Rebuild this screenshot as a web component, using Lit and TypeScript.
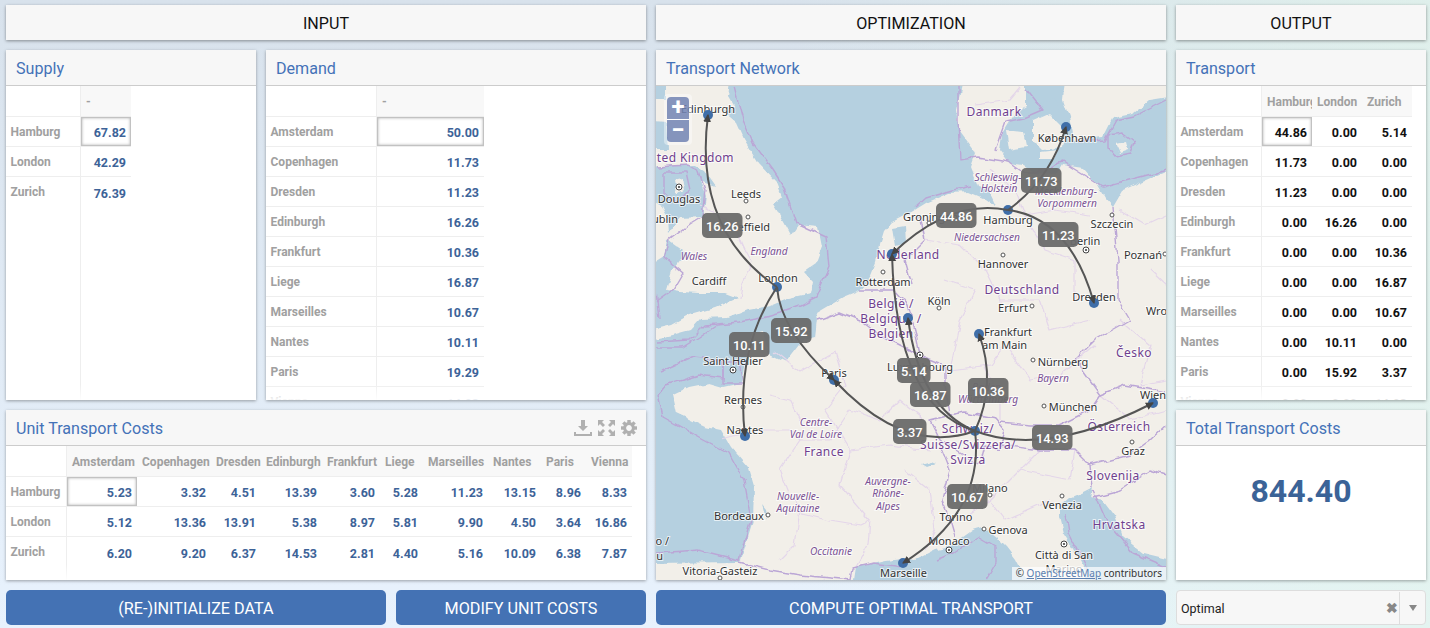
import { LitElement, css, html, svg } from 'lit';
import { customElement, property } from 'lit/decorators.js';

const F = css`Roboto, "Liberation Sans", sans-serif`;

const DEST = ['Amsterdam', 'Copenhagen', 'Dresden', 'Edinburgh', 'Frankfurt', 'Liege', 'Marseilles', 'Nantes', 'Paris', 'Vienna'];

@customElement('data-grid')
class DataGrid extends LitElement {
  static styles = css`
    :host { display: block; height: 100%; }
    .wrap { position: relative; height: 100%; overflow: hidden; display: flex; flex-direction: column; }
    .wrap::after {
      content: ''; position: absolute; left: 0; right: 0; bottom: 0; height: 16px;
      background: linear-gradient(rgba(255,255,255,0), rgba(255,255,255,.92));
    }
    table { border-collapse: separate; border-spacing: 0; table-layout: fixed; flex: none; font: 700 12.5px ${F}; }
    th, td { box-sizing: border-box; padding: 0 5px; overflow: hidden; white-space: nowrap; border-bottom: 1px solid #eee; }
    th { font-size: 12px; }
    thead th { height: 31px; background: #f8f8f8; color: #a0a0a0; text-align: left; font-weight: 700; padding-top: 1px; }
    thead th.corner { background: #fff; border-right: 1px solid #eee; }
    tbody th { height: 30px; color: #a0a0a0; text-align: left; font-weight: 700; border-right: 1px solid #eee; padding-left: 4.5px; }
    td { height: 30px; text-align: right; color: #3d6398; padding-top: 2px; }
    tbody tr:last-child th, tbody tr:last-child td { border-bottom: 0; }
    .dark td { color: #111; }
    td.sel { box-shadow: inset 0 0 0 1px #c2c2c2, inset 0 0 3px 1px #b0b0b0; }
    .stub { flex: 1; border-right: 1px solid #eee; box-sizing: border-box; }
  `;

  @property({ type: Array }) cols: string[] = [];
  @property({ type: Array }) rows: string[] = [];
  @property({ type: Array }) values: string[][] = [];
  @property({ type: Array }) widths: number[] = [];
  @property({ type: Boolean }) dark = false;

  render() {
    const total = this.widths.reduce((a, b) => a + b, 0);
    return html`<div class="wrap">
      <table class=${this.dark ? 'dark' : ''} style="width:${total}px">
        <colgroup>${this.widths.map((w) => html`<col style="width:${w}px" />`)}</colgroup>
        <thead><tr><th class="corner"></th>${this.cols.map((c) => html`<th>${c}</th>`)}</tr></thead>
        <tbody>
          ${this.rows.map((r, i) => html`<tr><th>${r}</th>${this.values[i].map((v, j) => html`<td class=${i === 0 && j === 0 ? 'sel' : ''}>${v}</td>`)}</tr>`)}
        </tbody>
      </table>
      <div class="stub" style="width:${this.widths[0]}px"></div>
    </div>`;
  }
}

// land shapes, in page coordinates because the map viewBox starts at the panel corner
const LAND = [
  // great britain
  '666,70 731,70 728,97 734,107 724,112 736,122 744,140 758,163 776,182 782,197 773,204 784,222 791,235 798,225 818,227 822,247 816,263 803,272 813,283 811,293 789,298 770,306 748,310 728,318 700,319 690,330 672,335 640,342 640,333 672,325 690,315 715,308 738,298 725,293 700,293 680,292 666,290 672,270 685,252 665,238 680,218 703,217 706,197 700,180 716,186 706,172 693,165 640,167 640,150 668,150 666,122 640,120 640,100 666,100',
  // ireland
  '640,195 662,205 667,215 668,235 664,255 640,270',
  // continent
  '640,563 739,562 741,560 753,520 754,487 748,467 731,447 721,430 706,427 676,413 672,395 689,387 709,383 723,387 741,383 743,372 751,333 763,330 768,353 786,362 803,340 816,337 818,320 816,313 843,297 860,290 870,277 876,262 880,245 884,232 893,222 905,216 926,203 949,193 969,192 983,198 996,207 988,190 979,187 971,167 976,153 959,130 956,110 966,70 1026,70 1026,107 1016,113 1009,122 1001,135 999,150 1009,163 1023,165 1036,173 1058,174 1063,165 1083,168 1096,183 1104,197 1113,207 1123,190 1180,165 1180,600 640,600',
  // sweden
  '1066,70 1063,100 1069,117 1073,140 1103,137 1113,117 1133,113 1149,100 1180,95 1180,70',
  // zealand, funen, lolland, bornholm, man
  '1033,120 1049,113 1066,130 1063,147 1043,150 1033,140',
  '1006,130 1023,132 1026,147 1009,150',
  '1040,152 1058,150 1055,158 1040,158',
  '1116,144 1126,142 1128,150 1120,153',
  '674,180 682,178 684,190 676,194',
];

const WATER = [
  // mediterranean
  '851,600 856,567 886,560 903,558 916,560 936,550 949,547 973,530 983,527 996,537 1006,547 1016,560 1036,600',
  // adriatic
  '1059,517 1059,507 1069,498 1083,492 1093,487 1091,497 1103,500 1116,517 1123,537 1143,553 1180,562 1180,600 1090,600 1083,567 1076,553 1063,533',
  // lakes and small inlets
  '893,228 905,226 906,243 896,246',
  '921,464 931,461 936,463 926,467',
  '762,505 766,510 768,520 764,512',
  '1040,103 1055,98 1060,112 1045,112',
];

const COUNTRY = [
  '734,86 743,120 753,143 773,170 784,187 796,223 826,237 829,267 816,297 800,305 780,312 760,318 740,322 705,325 690,340 656,342',
  '656,347 683,347 699,337 716,325',
  '958,86 958,120 960,160 978,157 1009,162 1023,172 1036,172 1063,162 1103,187 1166,170',
  '1026,88 1043,110 1024,118 1005,122 995,150',
  '1078,142 1105,140 1116,120 1135,116 1166,100',
  '916,207 926,198 953,190 972,186',
  '1108,135 1122,133 1134,142 1130,154 1116,157 1108,147 1108,135',
  '658,395 666,385 699,375 723,378 723,360 693,357 660,372',
  '658,395 663,417 699,437 729,453 744,480 751,520 739,560 699,550 656,553',
  '723,363 739,363 743,383 723,383 723,363',
  '851,580 853,568 873,563 903,567',
  '936,560 953,553 979,537 996,547 996,563 986,580',
  '1066,513 1069,533 1086,567 1094,580',
  '1093,490 1106,520 1133,553 1166,567',
  '656,167 688,165 699,172 705,190 702,217 689,225 669,240 664,257 683,273 673,290 656,302',
  '656,290 659,320',
  '664,172 686,172 690,190 678,203 664,195 664,172',
  '818,320 840,312 860,320 880,335 900,345 920,355 945,365 945,385 950,415 965,412 995,418 1005,430 1000,450 985,445 980,465 955,450 940,440 930,420 950,415',
  '940,445 950,470 942,500 950,520 955,537',
  '1000,422 1030,425 1060,425 1090,410 1100,395 1075,360 1095,340 1130,320 1118,300 1118,260 1113,207',
  '1000,445 1040,450 1075,450 1090,465 1092,487',
  '1090,465 1130,455 1150,440 1166,425',
  '1093,497 1120,490 1150,470 1166,475',
  '1100,395 1125,385 1166,392',
  '920,215 925,240 905,260 912,285',
  '860,290 895,290 908,305 915,330 920,355',
  '739,562 770,570 800,575 851,580',
];

const REGION = [
  '740,240 752,262 742,285 740,298',
  '700,205 735,225 745,250',
  '775,352 800,372 835,352 845,385 825,410 850,450 840,485 870,520 868,545 856,567',
  '722,440 760,430 790,430 800,440 780,470 790,495 800,510 795,545 780,560',
  '800,440 830,440 850,410 880,420 900,400 925,420',
  '790,510 830,520 860,525 870,520',
  '850,450 890,445 930,450',
  '770,395 790,400 800,420',
  '905,470 930,490 935,530 925,550',
  '990,170 1015,190 1025,215 1055,210 1090,215',
  '925,240 960,245 985,270 1000,300 1040,300 1050,330 1090,320',
  '945,280 975,290 960,320 950,370 990,365 1005,345 1030,380 1060,375 1095,345',
  '985,365 1000,400 1000,420',
  '1025,215 1045,250 1075,260 1075,300',
  '1120,320 1150,345 1140,385 1166,380',
  '1075,450 1070,480 1020,470 990,500 960,520',
  '990,500 1005,520 1050,500',
  '1100,395 1130,420 1166,410',
  '1020,470 1040,450',
  '1150,270 1166,285',
  '1120,210 1145,225 1166,215',
  '975,105 1010,100 1020,88',
];

type Lbl = [string, number, number, string?];

const CITIES: Lbl[] = [
  ['Edinburgh', 708, 108], ['Leeds', 746, 193], ['Douglas', 679, 198], ['Sheffield', 770, 226, 'end'], ['Dublin', 678, 218, 'end'],
  ['Cardiff', 709, 280], ['London', 778, 277], ['Rotterdam', 883, 281], ['Groningen', 903, 216, 'start'], ['København', 1067, 137],
  ['Hamburg', 1008, 219], ['Szczecin', 1112, 223], ['Berlin', 1085, 240], ['Poznań', 1143, 254], ['Hannover', 1003, 263],
  ['Köln', 939, 300], ['Erfurt', 1013, 307], ['Dresden', 1094, 296], ['Wrocław', 1146, 310, 'start'], ['Frankfurt', 984, 331, 'start'],
  ['am Main', 982, 344, 'start'], ['Nürnberg', 1063, 361], ['München', 1073, 406], ['Wien', 1153, 394], ['Graz', 1133, 450],
  ['Milano', 990, 487], ['Venezia', 1062, 504], ['Torino', 956, 516], ['Genova', 1008, 529], ['Monaco', 949, 540],
  ['Città di San', 1064, 554], ['Marino', 1064, 568], ['Marseille', 880, 572, 'start'], ['Luxembourg', 920, 366], ['Paris', 834, 372],
  ['Saint Helier', 733, 360], ['Rennes', 743, 399], ['Nantes', 745, 429], ['Bordeaux', 739, 515], ['o /', 669, 540, 'end'],
  ['u', 663, 555, 'end'], ['Vitoria-Gasteiz', 720, 570],
];

const COUNTRIES: Lbl[] = [
  ['United Kingdom', 734, 157, 'end'], ['Nederland', 908, 254], ['België /', 891, 303], ['Belgique /', 891, 318], ['Belgien', 891, 333],
  ['Danmark', 994, 111], ['Deutschland', 1022, 289], ['Česko', 1134, 352], ['Österreich', 1119, 426], ['Schweiz/', 968, 428],
  ['Suisse/Svizzera/', 968, 444], ['Svizra', 968, 459], ['Slovenija', 1113, 475], ['Hrvatska', 1119, 524], ['France', 824, 451],
];

const REGIONS: Lbl[] = [
  ['Wales', 694, 256], ['England', 769, 251], ['Schleswig-', 998, 177], ['Holstein', 999, 188], ['Mecklenburg-', 1066, 191],
  ['Vorpommern', 1067, 203], ['Niedersachsen', 987, 237], ['Bayern', 1053, 378], ['Baden-', 988, 387], ['Württemberg', 988, 399],
  ['Centre-', 816, 422], ['Val de Loire', 816, 434], ['Auvergne-', 888, 481], ['Rhône-', 888, 493], ['Alpes', 888, 506],
  ['Nouvelle-', 798, 496], ['Aquitaine', 798, 508], ['Occitanie', 831, 551],
];

const DOTS = [[746, 201], [748, 217], [883, 272], [939, 308], [1032, 306], [1003, 255], [1112, 215], [1165, 254], [929, 223], [1033, 360], [1044, 406], [1132, 442], [990, 495], [1062, 496], [984, 529], [768, 515], [743, 407], [720, 578]];
const RINGS = [[679, 187], [1086, 250], [920, 355], [949, 550], [1064, 544], [733, 370]];
const NODES = [[708, 115], [777, 287], [745, 436], [834, 380], [903, 563], [975, 431], [979, 334], [1153, 403], [1066, 127], [1008, 210], [1094, 303], [892, 254], [908, 318]];

const ARCS = [
  'M777 287Q693 229 708 115',
  'M777 287Q735 350 745 436',
  'M777 287Q780 330 834 380',
  'M975 431Q905 456 834 380',
  'M975 431Q985 512 903 563',
  'M975 431Q997 383 979 334',
  'M975 431Q1046 458 1153 403',
  'M1008 210Q1050 180 1066 127',
  'M1008 210Q1070 218 1094 303',
  'M1008 210Q950 198 892 254',
  'M975 431Q896 407 892 254',
  'M975 431Q920 409 908 318',
];

const TAGS: [string, number, number][] = [
  ['16.26', 702, 213], ['10.11', 729, 332], ['15.92', 771, 318], ['44.86', 936, 203], ['11.73', 1021, 168], ['11.23', 1038, 222],
  ['5.14', 897, 358], ['16.87', 910, 382], ['3.37', 893, 419], ['10.36', 968, 378], ['14.93', 1032, 425], ['10.67', 947, 484],
];

@customElement('network-map')
class NetworkMap extends LitElement {
  static styles = css`
    :host { display: block; position: relative; height: 100%; overflow: hidden; background: #b5d0e0; }
    svg { display: block; }
    .land { fill: #f2efe9; }
    .water { fill: #b5d0e0; }
    .country { fill: none; stroke: #bba6d6; stroke-width: 1.4; stroke-linejoin: round; }
    .region { fill: none; stroke: #e4d6ea; stroke-width: 1.2; stroke-linejoin: round; }
    text { font-family: "Noto Sans", sans-serif; text-anchor: middle; dominant-baseline: central; paint-order: stroke; stroke: rgba(255,255,255,.7); stroke-width: 2px; }
    .city { font-size: 11px; fill: #333; }
    .nation { font-size: 12px; fill: #6f3f8e; letter-spacing: .4px; }
    .state { font-size: 10.2px; fill: #7a5294; font-style: italic; }
    .dot { fill: #fff; stroke: #555; stroke-width: 1; }
    .ring { fill: #fff; stroke: #444; stroke-width: 1; }
    .core { fill: #444; }
    .node { fill: #3f6ea8; }
    .arc { fill: none; stroke: #555; stroke-width: 2; }
    .tag rect { fill: #6a6a6a; fill-opacity: .95; }
    .tag text { font: 500 12.8px ${F}; fill: #fff; stroke: none; }
    .zoom {
      position: absolute; left: 8px; top: 8px; width: 22px; padding: 3px; border-radius: 4px;
      background: rgba(255,255,255,.4);
    }
    .zoom div {
      height: 22px; background: rgba(95,115,170,.75); color: #fff; text-align: center;
      font: 700 24px/21px ${F};
    }
    .zoom div:first-child { border-radius: 4px 4px 0 0; border-bottom: 1px solid #fff; }
    .zoom div:last-child { border-radius: 0 0 4px 4px; }
    .credit {
      position: absolute; right: 0; bottom: 0; padding: 0 4px; height: 13px;
      background: rgba(255,255,255,.7); color: #333; font: 10px/13px "Noto Sans", sans-serif;
    }
    .credit span { color: #5a7fb0; text-decoration: underline; }
  `;

  labels(list: Lbl[], cls: string) {
    return list.map(([t, x, y, a]) => svg`<text class=${cls} x=${x} y=${y} style=${a ? `text-anchor:${a}` : ''}>${t}</text>`);
  }

  render() {
    return html`<svg width="510" height="494" viewBox="656 86 510 494">
        <defs>
          <marker id="head" markerWidth="10" markerHeight="10" refX="7" refY="4" orient="auto" markerUnits="userSpaceOnUse">
            <path d="M0 0L8 4L0 8z" fill="#444" />
          </marker>
          <filter id="rough" color-interpolation-filters="sRGB">
            <feTurbulence type="fractalNoise" baseFrequency=".09" numOctaves="2" seed="3" />
            <feDisplacementMap in="SourceGraphic" scale="6" xChannelSelector="R" yChannelSelector="G" />
            <feGaussianBlur stdDeviation=".35" />
          </filter>
        </defs>
        <g filter="url(#rough)">
          ${LAND.map((p) => svg`<polygon class="land" points=${p} />`)}
          ${WATER.map((p) => svg`<polygon class="water" points=${p} />`)}
          ${REGION.map((p) => svg`<polyline class="region" points=${p} />`)}
          ${COUNTRY.map((p) => svg`<polyline class="country" points=${p} />`)}
        </g>
        ${this.labels(REGIONS, 'state')}
        ${this.labels(COUNTRIES, 'nation')}
        ${this.labels(CITIES, 'city')}
        ${DOTS.map(([x, y]) => svg`<circle class="dot" cx=${x} cy=${y} r="2" />`)}
        ${RINGS.map(([x, y]) => svg`<circle class="ring" cx=${x} cy=${y} r="3" /><circle class="core" cx=${x} cy=${y} r="1.1" />`)}
        ${NODES.map(([x, y]) => svg`<circle class="node" cx=${x} cy=${y} r="5" />`)}
        ${ARCS.map((d) => svg`<path class="arc" d=${d} marker-end="url(#head)" />`)}
        ${TAGS.map(([t, x, y]) => {
          const w = t.length > 4 ? 40.5 : 33.5;
          return svg`<g class="tag"><rect x=${x} y=${y} width=${w} height="25" rx="5" /><text x=${x + w / 2} y=${y + 13}>${t}</text></g>`;
        })}
      </svg>
      <div class="zoom"><div>+</div><div>−</div></div>
      <div class="credit">© <span>OpenStreetMap</span> contributors</div>`;
  }
}

@customElement('app-root')
class AppRoot extends LitElement {
  static styles = css`
    :host {
      display: block; width: 1430px; height: 628px; overflow: hidden; font-family: ${F};
      background:
        linear-gradient(90deg, rgba(226,242,238,0) 55%, rgba(226,245,235,.7) 100%),
        linear-gradient(180deg, #d8e2ec 0%, #e8f2fd 100%);
    }
    .page { display: flex; gap: 10px; padding: 5px 4px 3px 6px; box-sizing: border-box; height: 100%; }
    .col { display: flex; flex-direction: column; gap: 10px; flex: none; }
    .col.a { width: 640px; }
    .col.b { width: 510px; }
    .col.c { width: 250px; }
    .row { display: flex; gap: 10px; }
    .bar {
      height: 35px; box-sizing: border-box; padding-top: 2px; background: #f7f7f7; box-shadow: 0 1px 3px rgba(0,0,0,.4);
      display: flex; align-items: center; justify-content: center; font-size: 16.1px; color: #111;
    }
    .panel { background: #fff; box-shadow: 0 1px 3px rgba(0,0,0,.35); display: flex; flex-direction: column; overflow: hidden; }
    .panel.tall { height: 350px; }
    .panel.short { height: 170px; }
    .panel.map { height: 530px; }
    .w250 { width: 250px; }
    .w380 { width: 380px; }
    .head {
      flex: none; height: 33px; padding: 2px 10px 0; display: flex; align-items: center; justify-content: space-between;
      background: #f7f7f7; border-bottom: 1px solid #ccc; color: #4472b8; font-size: 16.1px;
    }
    .body { flex: 1; min-height: 0; }
    .tools { display: flex; gap: 6px; align-items: center; margin: -2px -1px 0 0; }
    .tools svg { display: block; fill: #b0b0b0; }
    .btn {
      height: 35px; box-sizing: border-box; padding-top: 2px; background: #4472b4; color: #fff; border-radius: 5px; font-size: 16.2px;
      display: flex; align-items: center; justify-content: center;
    }
    .total { flex: 1; display: flex; justify-content: center; padding-top: 26px; font-size: 32px; font-weight: 700; color: #3b6397; }
    .select {
      height: 35px; box-sizing: border-box; background: #f7f7f7; border: 1px solid #ddd; border-radius: 4px; padding-top: 1px;
      display: flex; align-items: center; font-size: 12.5px; color: #222; padding-left: 4px;
    }
    .select .name { flex: 1; }
    .select .clear { color: #888; font-size: 14px; font-weight: 700; margin-right: 1px; }
    .select .caret { width: 25px; align-self: stretch; border-left: 1px solid #ddd; display: flex; align-items: center; justify-content: center; }
    .select .caret::after { content: ''; border: 4px solid transparent; border-top: 6px solid #888; border-bottom: 0; }
  `;

  tools() {
    return html`<div class="tools">
      <svg width="18" height="16" viewBox="0 0 18 16"><path d="M7 0h4v6h3l-5 5-5-5h3zM0 12h2v2h14v-2h2v4H0z" /></svg>
      <svg width="17" height="16" viewBox="0 0 17 16">
        <path d="M0 0h6L4 2l3 3-2 2-3-3-2 2zM17 0v6l-2-2-3 3-2-2 3-3-2-2zM17 16h-6l2-2-3-3 2-2 3 3 2-2zM0 16v-6l2 2 3-3 2 2-3 3 2 2z" />
      </svg>
      <svg width="16" height="16" viewBox="-8 -8 16 16">
        ${[0, 45, 90, 135, 180, 225, 270, 315].map((a) => svg`<rect x="-1.7" y="-8" width="3.4" height="4" transform="rotate(${a})" />`)}
        <circle r="4.4" fill="none" stroke="#b0b0b0" stroke-width="3" />
      </svg>
    </div>`;
  }

  render() {
    const num = (n: number) => n.toFixed(2);
    return html`<div class="page">
      <div class="col a">
        <div class="bar">INPUT</div>
        <div class="row">
          <section class="panel tall w250">
            <div class="head">Supply</div>
            <div class="body">
              <data-grid .cols=${['-']} .rows=${['Hamburg', 'London', 'Zurich']} .widths=${[75, 50]}
                .values=${[['67.82'], ['42.29'], ['76.39']]}></data-grid>
            </div>
          </section>
          <section class="panel tall w380">
            <div class="head">Demand</div>
            <div class="body">
              <data-grid .cols=${['-']} .rows=${DEST} .widths=${[111, 107]}
                .values=${[50, 11.73, 11.23, 16.26, 10.36, 16.87, 10.67, 10.11, 19.29, 14.93].map((v) => [num(v)])}></data-grid>
            </div>
          </section>
        </div>
        <section class="panel short">
          <div class="head">Unit Transport Costs ${this.tools()}</div>
          <div class="body">
            <data-grid .cols=${DEST} .rows=${['Hamburg', 'London', 'Zurich']} .widths=${[61, 70, 74, 50, 61, 58, 43, 65, 53, 45, 46]}
              .values=${[
                [5.23, 3.32, 4.51, 13.39, 3.6, 5.28, 11.23, 13.15, 8.96, 8.33],
                [5.12, 13.36, 13.91, 5.38, 8.97, 5.81, 9.9, 4.5, 3.64, 16.86],
                [6.2, 9.2, 6.37, 14.53, 2.81, 4.4, 5.16, 10.09, 6.38, 7.87],
              ].map((r) => r.map(num))}></data-grid>
          </div>
        </section>
        <div class="row">
          <div class="btn w380">(RE-)INITIALIZE DATA</div>
          <div class="btn w250">MODIFY UNIT COSTS</div>
        </div>
      </div>
      <div class="col b">
        <div class="bar">OPTIMIZATION</div>
        <section class="panel map">
          <div class="head">Transport Network</div>
          <div class="body"><network-map></network-map></div>
        </section>
        <div class="btn">COMPUTE OPTIMAL TRANSPORT</div>
      </div>
      <div class="col c">
        <div class="bar">OUTPUT</div>
        <section class="panel tall">
          <div class="head">Transport</div>
          <div class="body">
            <data-grid dark .cols=${['Hamburg', 'London', 'Zurich']} .rows=${DEST} .widths=${[86, 50, 50, 50]}
              .values=${[
                [44.86, 0, 5.14], [11.73, 0, 0], [11.23, 0, 0], [0, 16.26, 0], [0, 0, 10.36],
                [0, 0, 16.87], [0, 0, 10.67], [0, 10.11, 0], [0, 15.92, 3.37], [0, 0, 14.93],
              ].map((r) => r.map(num))}></data-grid>
          </div>
        </section>
        <section class="panel short">
          <div class="head">Total Transport Costs</div>
          <div class="total">844.40</div>
        </section>
        <div class="select"><span class="name">Optimal</span><span class="clear">✖</span><span class="caret"></span></div>
      </div>
    </div>`;
  }
}
